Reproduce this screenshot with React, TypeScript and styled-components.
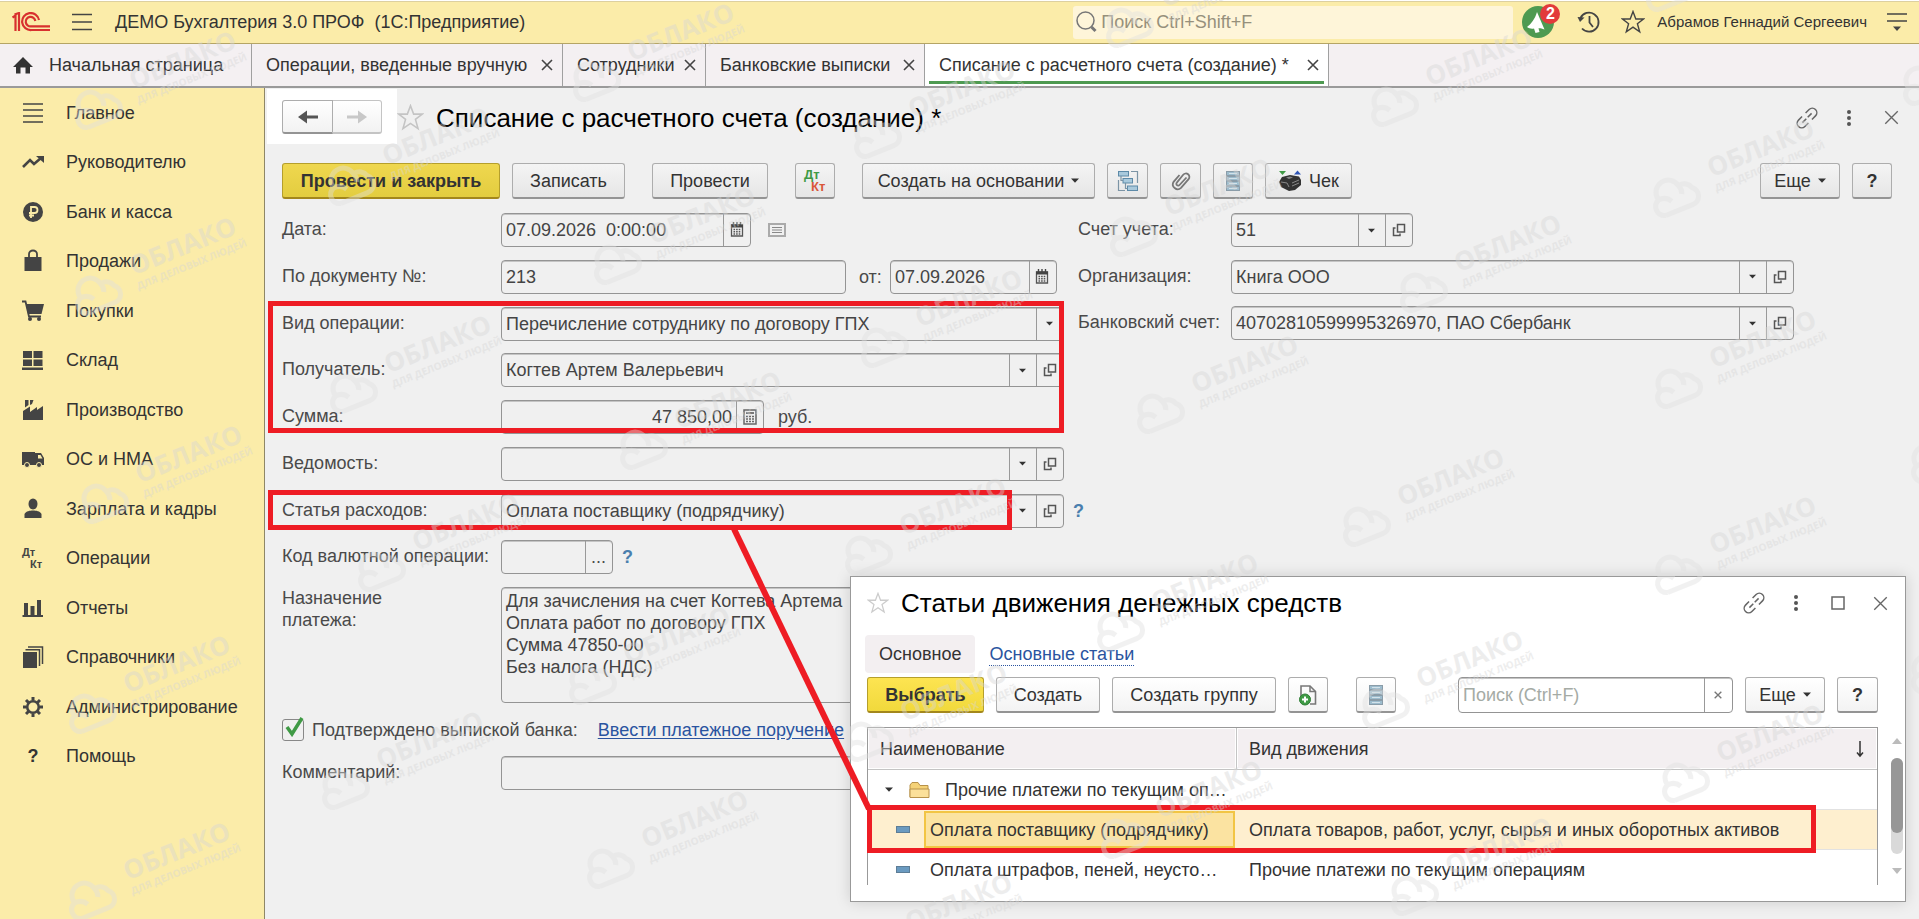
import React from "react";
import styled, { createGlobalStyle } from "styled-components";

const GlobalStyle = createGlobalStyle`
  *, *::before, *::after { box-sizing: border-box; }
  html, body { margin: 0; height: 100%; }
  body { background: #f0f0f0; overflow: hidden; }
  body, button, input, select, textarea {
    font-family: "Liberation Sans", Arial, sans-serif;
    font-size: 18px;
    line-height: 22px;
    color: #444;
  }
  #root { height: 100%; }
`;

const RED = "#ee1c24";

/* ---------- page frame ---------- */

const Page = styled.div`
  position: relative;
  display: flex;
  flex-direction: column;
  min-height: 100vh;
  overflow: hidden;
`;

const TopBar = styled.header`
  display: flex;
  align-items: center;
  gap: 22px;
  height: 44px;
  padding: 0 12px;
  background: #fbeca9;
  border-top: 1px solid #fff;
  border-bottom: 1px solid #b5a565;
  box-shadow: inset 0 1px 0 #ddd0a0;
`;

const PlainButton = styled.button`
  display: flex;
  align-items: center;
  justify-content: center;
  padding: 0;
  border: 0;
  background: none;
  color: #444;
`;

const AppTitle = styled.h1`
  flex: 1;
  margin: 0 0 0 1px;
  font-size: 18px;
  font-weight: 400;
  color: #333;
  white-space: pre;
`;

const TopRight = styled.div`
  display: flex;
  align-items: center;
  gap: 8px;
`;

const GlobalSearch = styled.label`
  display: flex;
  align-items: center;
  gap: 2px;
  width: 440px;
  height: 33px;
  padding-left: 2px;
  border-radius: 3px;
  background: #fef5d9;
`;

const GlobalSearchInput = styled.input`
  flex: 1;
  min-width: 0;
  padding: 0;
  border: 0;
  outline: 0;
  background: none;
  &::placeholder { color: #96907c; opacity: 1; }
`;

const TopActions = styled.div`
  display: flex;
  align-items: center;
  gap: 20px;
`;

const BellButton = styled(PlainButton)`
  position: relative;
  width: 36px;
  height: 36px;
`;

const Badge = styled.span`
  position: absolute;
  top: 0;
  right: -3px;
  width: 20px;
  height: 20px;
  border-radius: 10px;
  background: #e23b3b;
  color: #fff;
  font-size: 16px;
  font-weight: 700;
  line-height: 20px;
  text-align: center;
`;

const UserName = styled.span`
  margin: 0 12px 0 4px;
  font-size: 15px;
  color: #333;
  white-space: nowrap;
`;

const TabBar = styled.nav`
  display: flex;
  height: 44px;
  background: #f4f0f2;
  border-bottom: 2px solid #9a9a9a;
`;

const Tab = styled.div<{ $w: number; $active?: boolean }>`
  position: relative;
  display: flex;
  align-items: center;
  justify-content: space-between;
  width: ${(p) => p.$w}px;
  padding: 0 9px 0 14px;
  border-right: 1px solid #a0a0a0;
  background: ${(p) => (p.$active ? "#fff" : "transparent")};
  white-space: nowrap;
  color: #333;
  ${(p) =>
    p.$active &&
    `&::after {
      content: "";
      position: absolute;
      left: 4px;
      right: 4px;
      bottom: 2px;
      height: 3px;
      background: #4e9a51;
    }`}
`;

const HomeTab = styled(Tab)`
  justify-content: flex-start;
  gap: 16px;
  padding: 0 0 0 13px;
`;

const TabLink = styled.a`
  color: inherit;
  text-decoration: none;
`;

const Body = styled.div`
  display: flex;
  flex: 1;
`;

const Sidebar = styled.nav`
  flex: none;
  width: 265px;
  background: #fbeca9;
  border-right: 1px solid #8f8766;
`;

const MenuList = styled.ul`
  display: grid;
  grid-auto-rows: 1fr;
  height: 693px;
  margin: 0;
  padding: 0;
  list-style: none;
`;

const MenuLink = styled.a`
  display: flex;
  align-items: center;
  gap: 21px;
  height: 100%;
  padding-left: 21px;
  color: #333;
  text-decoration: none;
`;

const Work = styled.main`
  flex: 1;
  min-width: 0;
  padding: 1px 0 0 2px;
`;

/* ---------- document heading and toolbar ---------- */

const Heading = styled.div`
  display: flex;
  align-items: center;
  height: 57px;
  padding-right: 16px;
`;

const NavBlock = styled.div`
  display: flex;
  align-self: flex-start;
  height: 55px;
  padding: 11px 15px;
  background: #fff;
`;

const buttonFace = `
  display: flex;
  align-items: center;
  justify-content: center;
  padding: 0;
  border: 1px solid #adadad;
  border-bottom: 2px solid #949494;
  border-radius: 3px;
  white-space: nowrap;
  color: #333;
`;

const NavButton = styled.button<{ $last?: boolean }>`
  ${buttonFace}
  width: ${(p) => (p.$last ? 49 : 51)}px;
  height: 34px;
  background: linear-gradient(#fff, #f2f2f2);
  border-radius: ${(p) => (p.$last ? "0 3px 3px 0" : "3px 0 0 3px")};
  ${(p) => p.$last && "border-color: #c4c4c4; border-left: 0;"}
`;

const DocTitle = styled.h2`
  margin: 0 auto 0 12px;
  font-size: 26px;
  font-weight: 400;
  line-height: 30px;
  color: #000;
  white-space: nowrap;
`;

const HeadIcons = styled.div`
  display: flex;
  align-items: center;
  gap: 18px;
`;

const HeadButton = styled(PlainButton)`
  width: 24px;
  height: 24px;
`;

const Toolbar = styled.div`
  display: flex;
  gap: 12px;
  padding: 17px 27px 14px 15px;
`;

const Button = styled.button<{ $w: number; $primary?: boolean; $white?: boolean; $before?: number }>`
  ${buttonFace}
  gap: 7px;
  width: ${(p) => p.$w}px;
  height: 36px;
  margin-left: ${(p) => p.$before ?? 0}px;
  background: ${(p) =>
    p.$primary
      ? p.$white
        ? "linear-gradient(#fde451, #f1d93c)"
        : "linear-gradient(#efd74f, #e3cd3f)"
      : p.$white
        ? "linear-gradient(#fff, #f3f3f3)"
        : "linear-gradient(#f4f4f4, #e6e6e6)"};
  ${(p) => p.$primary && "border-color: #b59f2c; border-bottom-color: #a3871c; font-weight: 700;"}
`;

const Spacer = styled.span`
  flex: 1;
`;

const Help = styled.button`
  padding: 0;
  border: 0;
  background: none;
  color: #4a7fae;
  font-weight: 700;
`;

/* ---------- form ---------- */

const Form = styled.form`
  display: grid;
  grid-template-columns: 796px 1fr;
  padding-left: 15px;
`;

const Rows = styled.div<{ $rows: number; $h: number }>`
  display: grid;
  grid-template-rows: repeat(${(p) => p.$rows}, 1fr);
  height: ${(p) => p.$h}px;
`;

const Row = styled.div<{ $label: number }>`
  display: grid;
  grid-template-columns: ${(p) => p.$label}px 1fr;
  align-items: start;
`;

const Label = styled.label`
  padding-top: 5px;
  color: #4a4a4a;
  white-space: nowrap;
`;

const Cells = styled.div`
  display: flex;
  align-items: center;
  height: 34px;
`;

const Field = styled.span<{ $w: number; $h?: number }>`
  display: flex;
  width: ${(p) => p.$w}px;
  height: ${(p) => p.$h ?? 34}px;
  border: 1px solid #949494;
  border-radius: 4px;
  box-shadow: inset 0 1px 0 #c4c4c4;
  overflow: hidden;
`;

const FieldInput = styled.input<{ $right?: boolean }>`
  flex: 1;
  min-width: 0;
  padding: 0 4px;
  border: 0;
  outline: 0;
  background: none;
  text-align: ${(p) => (p.$right ? "right" : "left")};
  &::placeholder { color: #a5aba5; opacity: 1; }
`;

const FieldSelect = styled.select`
  flex: 1;
  min-width: 0;
  padding: 0 4px;
  border: 0;
  outline: 0;
  appearance: none;
  background: none;
`;

const FieldButton = styled.button<{ $w?: number }>`
  display: flex;
  align-items: center;
  justify-content: center;
  flex: none;
  width: ${(p) => p.$w ?? 27}px;
  padding: 0 1px 0 0;
  border: 0;
  border-left: 1px solid #999;
  background: none;
  color: #4d4d4d;
`;

const Inline = styled.label<{ $x: number; $r?: number }>`
  margin: 0 ${(p) => p.$r ?? 0}px 0 ${(p) => p.$x}px;
  color: #4a4a4a;
`;

const Hint = styled.span<{ $x: number }>`
  display: flex;
  margin-left: ${(p) => p.$x}px;
`;

const Purpose = styled.textarea`
  display: block;
  width: 563px;
  height: 116px;
  margin: 0;
  padding: 2px 4px;
  border: 1px solid #949494;
  border-radius: 4px;
  box-shadow: inset 0 1px 0 #c4c4c4;
  background: none;
  outline: 0;
  resize: none;
`;

const PurposeRow = styled(Row)`
  ${Label} { padding-top: 0; }
`;

const ConfirmRow = styled.div`
  display: flex;
  align-items: center;
  gap: 20px;
  margin: 14px 0 13px;
  height: 26px;
`;

const CheckLabel = styled.label`
  display: flex;
  align-items: center;
  gap: 8px;
  color: #4a4a4a;
`;

const CheckBox = styled.span`
  position: relative;
  display: flex;
  width: 22px;
  height: 22px;
  svg { position: absolute; left: 3px; top: -2px; }
`;

const CheckInput = styled.input`
  appearance: none;
  width: 22px;
  height: 22px;
  margin: 0;
  border: 1px solid #888;
  border-radius: 3px;
`;

const TextLink = styled.a<{ $dotted?: boolean }>`
  color: #2a54a0;
  ${(p) =>
    p.$dotted
      ? "text-decoration: none; border-bottom: 1px dotted #2a54a0;"
      : "text-decoration: underline; text-underline-offset: 2px;"}
  white-space: nowrap;
`;

/* ---------- floating window ---------- */

const Window = styled.section`
  position: absolute;
  top: 576px;
  left: 850px;
  right: 13px;
  height: 326px;
  padding: 6px 27px 0 16px;
  background: #fff;
  border: 1px solid #999;
  box-shadow: 0 0 14px rgba(0, 0, 0, 0.15);
`;

const WindowHead = styled.div`
  display: flex;
  align-items: center;
  height: 40px;
  margin-right: -14px;
`;

const WindowTabs = styled.div`
  display: flex;
  align-items: center;
  gap: 14px;
  height: 38px;
  margin: 12px 0 4px -2px;
`;

const CurrentTab = styled.span`
  padding: 8px 14px;
  border-radius: 4px;
  background: #f3eff1;
  color: #333;
`;

const WindowTools = styled.div`
  display: flex;
  gap: 12px;
  margin-bottom: 14px;
`;

const TableWrap = styled.div`
  position: relative;
  height: 158px;
  border: 1px solid #999;
  border-bottom: 0;
  overflow: hidden;
`;

const Table = styled.table`
  width: 100%;
  table-layout: fixed;
  border-collapse: separate;
  border-spacing: 0;
  color: #333;
`;

const Th = styled.th<{ $w?: number }>`
  ${(p) => p.$w && `width: ${p.$w}px;`}
  height: 42px;
  padding: 0 12px;
  border-right: ${(p) => (p.$w ? "1px solid #c4c4c4" : "0")};
  border-bottom: 1px solid #c4c4c4;
  background: #f3eff1;
  box-shadow: inset 0 0 0 1px #fff;
  font-weight: 400;
  text-align: left;
`;

const ThInner = styled.span`
  display: flex;
  align-items: center;
  justify-content: space-between;
`;

const Td = styled.td<{ $picked?: boolean }>`
  height: 40px;
  padding: 0 0 0 12px;
  border-bottom: 1px solid #e2e2e2;
  background: ${(p) => (p.$picked ? "#feefcf" : "#fff")};
  white-space: nowrap;
`;

const NameCell = styled.div<{ $group?: boolean }>`
  display: flex;
  align-items: center;
  gap: ${(p) => (p.$group ? 15 : 14)}px;
  margin-left: ${(p) => (p.$group ? 4 : 16)}px;
`;

const PickedName = styled.span<{ $picked?: boolean }>`
  flex: 1;
  height: 37px;
  margin: 0 2px 0 0;
  padding: 0 4px;
  line-height: 34px;
  border: 2px solid ${(p) => (p.$picked ? "#f2c544" : "transparent")};
  background: ${(p) => (p.$picked ? "#fbe3a1" : "transparent")};
`;

const Scroll = styled.div`
  position: absolute;
  top: 160px;
  right: 2px;
  display: flex;
  flex-direction: column;
  align-items: center;
  gap: 13px;
  width: 12px;
`;

const Track = styled.div`
  width: 12px;
  height: 96px;
  border-radius: 6px;
  background: #d9d9d9;
`;

const Thumb = styled.div`
  height: 75px;
  border-radius: 6px;
  background: #979797;
`;

/* ---------- overlays ---------- */

const Overlay = styled.svg`
  position: absolute;
  top: 0;
  left: 0;
  width: 100%;
  height: 100%;
  pointer-events: none;
`;

/* ---------- icons ---------- */

type IconProps = { w?: number; h?: number; box?: string; children: React.ReactNode };
const Icon = ({ w = 24, h = 24, box, children }: IconProps) => (
  <svg width={w} height={h} viewBox={box ?? `0 0 ${w} ${h}`} fill="none" stroke="#444" strokeWidth="1.5" aria-hidden="true">
    {children}
  </svg>
);

const Logo = () => (
  <Icon w={38} h={20}>
    <g stroke="#d8312f" strokeWidth="2.200">
      <path d="M0.500 5.500 L3.500 3.500 V19" />
      <path d="M2.500 2.500 L7 1 V19" />
      <path d="M27 8 A8.500 8.500 0 1 0 19.500 18 H38" />
      <path d="M23.300 9 A4.800 4.800 0 1 0 19.500 14.300 H38" />
    </g>
  </Icon>
);
const Burger = () => (
  <Icon w={20} h={18}>
    <path d="M0 1.500H20M0 9H20M0 16.500H20" strokeWidth="1.500" />
  </Icon>
);
const SearchIcon = () => (
  <Icon w={24} h={24}>
    <circle cx="10.500" cy="10.500" r="8.500" stroke="#777" />
    <path d="M16.500 17 L20.500 21" stroke="#777" strokeWidth="3" />
  </Icon>
);
const Bell = () => (
  <Icon w={34} h={34}>
    <circle cx="16" cy="17" r="16" fill="#4e9a51" stroke="none" />
    <path d="M5 22 C9 19 13 14 15 7 L22.500 24.500 C20 23.500 18 23 16.500 23.200 L17.500 27 L13.500 28 L12 23.500 C9.500 24 7 23.500 5 22Z" fill="#fff" stroke="none" />
  </Icon>
);
const History = () => (
  <Icon w={24} h={24}>
    <path d="M3.500 8 A9.500 9.500 0 1 1 5 18.500" strokeWidth="1.800" />
    <path d="M0.500 7 L7.500 7.500 L3 12Z" fill="#444" stroke="none" />
    <path d="M12.500 6 V12.500 L16 17" strokeWidth="1.800" />
  </Icon>
);
const Star = ({ size = 24, color = "#444" }: { size?: number; color?: string }) => (
  <Icon w={size} h={size} box="0 0 24 24">
    <path d="M12 1.500 L14.800 9 H22.500 L16.400 13.700 L18.700 21.800 L12 17.200 L5.300 21.800 L7.600 13.700 L1.500 9 H9.200Z" stroke={color} strokeWidth="1.400" />
  </Icon>
);
const MenuDown = () => (
  <Icon w={20} h={20}>
    <path d="M0 2H20M0 9H20" strokeWidth="1.500" />
    <path d="M6 14.500H14L10 19Z" fill="#444" stroke="none" />
  </Icon>
);
const Cross = ({ size = 11, weight = 1.6, color = "#444" }: { size?: number; weight?: number; color?: string }) => (
  <Icon w={size} h={size} box="0 0 12 12">
    <path d="M1 1 L11 11 M11 1 L1 11" strokeWidth={weight} stroke={color} />
  </Icon>
);
const Home = () => (
  <Icon w={20} h={18}>
    <path d="M10 1 L20 11 H17 V17.500 H12.500 V11.500 H7.500 V17.500 H3 V11 H0Z" fill="#333" stroke="none" />
  </Icon>
);
const ArrowIcon = ({ right }: { right?: boolean }) => (
  <Icon w={20} h={16}>
    <path
      d={right ? "M0 6.500H11V1.500L20 8L11 14.500V9.500H0Z" : "M20 6.500H9V1.500L0 8L9 14.500V9.500H20Z"}
      fill={right ? "#c8c8c8" : "#555"}
      stroke="none"
    />
  </Icon>
);
const LinkIcon = () => (
  <Icon w={24} h={24}>
    <g stroke="#666" strokeWidth="1.500" transform="rotate(-45 12 12)">
      <path d="M9.500 7.500 H4.500 A4.500 4.500 0 0 0 4.500 16.500 H9.500" />
      <path d="M14.500 7.500 H19.500 A4.500 4.500 0 0 1 19.500 16.500 H14.500" />
      <path d="M5.500 12H18.500" strokeDasharray="5.500 2" />
    </g>
  </Icon>
);
const Dots = () => (
  <Icon w={6} h={16}>
    <g fill="#555" stroke="none">
      <circle cx="3" cy="2" r="2" />
      <circle cx="3" cy="8" r="2" />
      <circle cx="3" cy="14" r="2" />
    </g>
  </Icon>
);
const Square = () => (
  <Icon w={14} h={14}>
    <rect x="1" y="1" width="12" height="12" stroke="#666" />
  </Icon>
);
const Caret = ({ w = 8 }: { w?: number }) => (
  <Icon w={w} h={5} box="0 0 8 5">
    <path d="M0 0.500H8L4 4.800Z" fill="#333" stroke="none" />
  </Icon>
);
const OpenIcon = () => (
  <Icon w={14} h={14}>
    <path d="M5.500 1.500H12.500V9H5.500ZM3.500 5H1.500V12.500H8V10.500" stroke="#555" />
  </Icon>
);
const Calendar = () => (
  <Icon w={14} h={16}>
    <path d="M1.500 3H12.500V14H1.500Z" stroke="#555" strokeWidth="1.300" />
    <path d="M1 4H13" stroke="#444" strokeWidth="3" />
    <path d="M3.500 0V3M7 0V3M10.500 0V3" stroke="#444" strokeWidth="1.400" />
    <path d="M3.500 7.500H11M3.500 9.800H11M3.500 12H11" strokeWidth="1.400" strokeDasharray="1.600 1" stroke="#555" />
  </Icon>
);
const Calculator = () => (
  <Icon w={14} h={16}>
    <rect x="1" y="1" width="12" height="14" stroke="#666" />
    <path d="M3 4H11" strokeWidth="2" stroke="#777" />
    <path d="M3 7.500H11M3 10H11M3 12.500H11" strokeDasharray="2 1" stroke="#666" />
  </Icon>
);
const Register = () => (
  <Icon w={18} h={14}>
    <rect x="1" y="1" width="16" height="12" stroke="#aaa" strokeWidth="2" />
    <path d="M4 4.500H14M4 7H14M4 9.500H14" stroke="#888" strokeWidth="1.200" />
  </Icon>
);
const DtKt = ({ color }: { color?: boolean }) => (
  <svg width="24" height="24" viewBox="0 0 24 24" fontFamily="Liberation Sans, sans-serif" fontWeight="700" fontSize={color ? 13 : 11} aria-hidden="true">
    <text x="1" y="10" fill={color ? "#3f9a45" : "#444"}>Дт</text>
    <text x={color ? 8 : 9} y="22" fill={color ? "#d9573a" : "#444"}>Кт</text>
  </svg>
);
const Structure = () => (
  <Icon w={22} h={22}>
    <g fill="#a9c9dc" stroke="#5d8aa8" strokeWidth="1">
      <rect x="1.500" y="1.500" width="10" height="4.500" />
      <rect x="6" y="8.500" width="9.500" height="4.500" />
      <rect x="10.500" y="16" width="10" height="4.500" />
    </g>
    <path d="M14 1.500H20.500V13M1.500 10V20.500H8M4 6V10.500H6M8.500 13V18.500H10.500" stroke="#7c94a5" strokeWidth="1.200" />
  </Icon>
);
const Clip = () => (
  <Icon w={22} h={22}>
    <path
      d="M16.500 7.500 L9.500 15 A1.800 1.800 0 0 1 6.800 12.600 L13.200 4.800 A3.400 3.400 0 0 1 18.600 9.200 L11 17.800 A4.800 4.800 0 0 1 3.600 11.800 L9.500 5"
      stroke="#777"
      strokeWidth="1.800"
    />
  </Icon>
);
const ListIcon = () => (
  <Icon w={16} h={22}>
    <g fill="#9dbccd" stroke="#8a9ca8" strokeWidth="1">
      <rect x="1.500" y="1.500" width="13" height="4" />
      <rect x="1.500" y="6.500" width="13" height="4" />
      <rect x="1.500" y="11.500" width="13" height="4" />
      <rect x="1.500" y="16.500" width="13" height="4" />
    </g>
    <path d="M4 3.500H12M4 8.500H12M4 13.500H12M4 18.500H12" stroke="#d3e2ea" strokeWidth="1" />
  </Icon>
);
const CheckPrinter = () => (
  <Icon w={24} h={24}>
    <path d="M1 2H8L4.500 6Z" fill="#3f9a45" stroke="none" />
    <path d="M16 5.500L19.500 1.500L23 5.500Z" fill="#2f55b5" stroke="none" />
    <path d="M4 8L12 6L21 7.500L23 11V16L17 21L11 22L3 18L1 13Z" fill="#333" stroke="none" />
    <path d="M8 8.500L12 7.500L15 8.500L11 10Z" fill="#888" stroke="none" />
    <path d="M3 13L9 14L11 18M14 14L21 11M14 17L21 14" stroke="#888" strokeWidth="1" />
  </Icon>
);
const AddDoc = () => (
  <Icon w={20} h={22}>
    <path d="M3 12V2H12L17.500 7.500V20H12" stroke="#777" strokeWidth="1.600" />
    <path d="M12 2V7.500H17.500" stroke="#777" />
    <circle cx="7" cy="15.500" r="5.500" fill="#3f9a45" stroke="#2f7f36" strokeWidth="1" />
    <path d="M7 12.500V18.500M4 15.500H10" stroke="#fff" strokeWidth="2" />
  </Icon>
);
const Folder = () => (
  <Icon w={21} h={18}>
    <path d="M1 16V4L3 1.500H9L11 4.500H19V16Z" fill="#f5d277" stroke="#b8924a" strokeWidth="1" />
    <path d="M1 16.500V8H20V16.500Z" fill="#fbe09a" stroke="#b8924a" strokeWidth="1" />
  </Icon>
);
const Dash = () => (
  <Icon w={14} h={7}>
    <rect x="0.500" y="0.500" width="13" height="6" fill="#6a9ac0" stroke="#5d7d96" strokeWidth="1" />
  </Icon>
);
const SortDown = () => (
  <Icon w={10} h={18}>
    <path d="M5 1V16M2 12.500L5 16L8 12.500" stroke="#333" />
  </Icon>
);

/* Section icons share a 24px box and one dark fill. */
const sectionIcons: Record<string, React.ReactNode> = {
  main: <path d="M2 3H22M2 9H22M2 15H22M2 21H22" strokeWidth="1.600" />,
  chief: (
    <>
      <path d="M2 17L9 10L13 14L20 8" strokeWidth="2.600" />
      <path d="M15 6H23V13Z" fill="#444" stroke="none" />
    </>
  ),
  bank: (
    <>
      <circle cx="12" cy="12" r="10" fill="#444" stroke="none" />
      <path d="M10 18V7H13.500A3 3 0 0 1 13.500 13H8M8 15.500H13" stroke="#fbeca9" strokeWidth="1.800" />
    </>
  ),
  sales: (
    <>
      <path d="M3.500 8H20.500V22H3.500Z" fill="#444" stroke="none" />
      <path d="M8 11V5A4 3.500 0 0 1 16 5V11" strokeWidth="1.800" />
    </>
  ),
  buy: (
    <>
      <path d="M5 5H23L20.500 15H7Z" fill="#444" stroke="none" />
      <path d="M1 2.500H4.500L8 17.500H20" strokeWidth="1.800" />
      <circle cx="9" cy="20" r="2" fill="#444" stroke="none" />
      <circle cx="18" cy="20" r="2" fill="#444" stroke="none" />
    </>
  ),
  store: <path d="M2 3H11V10H2ZM12.500 3H21.500V10H12.500ZM2 11.500H11V18H2ZM12.500 11.500H21.500V18H12.500ZM1 19.500H22V22H1Z" fill="#444" stroke="none" />,
  plant: <path d="M2 22V13L9 8.500V14L16 9V12L22 8V22ZM4 2H7.500V7L4 9.500ZM9 2H12.500L11 6L9 7Z" fill="#444" stroke="none" />,
  assets: (
    <>
      <path d="M1 5H14V18H1ZM15 6H20L23 11V18H13V6Z" fill="#444" stroke="none" />
      <path d="M17 8H19.500L21.500 11.500H17Z" fill="#fbeca9" stroke="none" />
      <circle cx="6" cy="18" r="2.500" fill="#444" stroke="#fbeca9" strokeWidth="1" />
      <circle cx="18" cy="18" r="2.500" fill="#444" stroke="#fbeca9" strokeWidth="1" />
    </>
  ),
  staff: (
    <>
      <ellipse cx="12" cy="7" rx="4.500" ry="5.500" fill="#444" stroke="none" />
      <path d="M3.500 21V17C5 14 9 13.500 12 13.500S19 14 20.500 17V21Z" fill="#444" stroke="none" />
    </>
  ),
  reports: <path d="M3 7H7V19H3ZM9.500 10H13.500V19H9.500ZM16 4H20V19H16ZM1.500 19H22V21H1.500Z" fill="#444" stroke="none" />,
  books: (
    <>
      <path d="M2 7H16V23H2Z" fill="#444" stroke="none" />
      <path d="M4.500 4.800H18.500V21M7 2H21.500V19" strokeWidth="1.500" />
    </>
  ),
  admin: (
    <>
      <circle cx="12" cy="12" r="5.800" strokeWidth="2.600" />
      <path d="M12 2V5.500M12 18.500V22M2 12H5.500M18.500 12H22M5 5L7.500 7.500M16.500 16.500L19 19M19 5L16.500 7.500M7.500 16.500L5 19" strokeWidth="3" />
    </>
  ),
};

const QuestionBox = styled.span`
  width: 24px;
  font-weight: 700;
  text-align: center;
`;

const sections: [string, string][] = [
  ["main", "Главное"],
  ["chief", "Руководителю"],
  ["bank", "Банк и касса"],
  ["sales", "Продажи"],
  ["buy", "Покупки"],
  ["store", "Склад"],
  ["plant", "Производство"],
  ["assets", "ОС и НМА"],
  ["staff", "Зарплата и кадры"],
  ["ops", "Операции"],
  ["reports", "Отчеты"],
  ["books", "Справочники"],
  ["admin", "Администрирование"],
  ["help", "Помощь"],
];

const SectionIcon = ({ id }: { id: string }) => {
  if (id === "ops") return <DtKt />;
  if (id === "help") return <QuestionBox aria-hidden="true">?</QuestionBox>;
  return <Icon>{sectionIcons[id]}</Icon>;
};

/* ---------- watermark and callouts ---------- */

const marks: [number, number][] = [
  [96, 108], [594, 80], [1127, 26], [1667, -10], [1392, 105], [1924, 84], [1674, 196], [1421, 291],
  [1676, 387], [349, 184], [96, 294], [615, 263], [875, 137], [1131, 235], [882, 346], [351, 392],
  [102, 502], [641, 448], [379, 570], [866, 554], [1158, 412], [1118, 630], [90, 712], [90, 899],
  [343, 788], [590, 683], [608, 867], [867, 740], [1122, 837], [872, 950], [1383, 707], [1683, 781],
  [1412, 894], [1932, 672], [1364, 525], [1676, 573], [1932, 462],
];

const Watermarks = () => (
  <Overlay aria-hidden="true" fontFamily="Open Sans, sans-serif">
    {marks.map(([x, y]) => (
      <g key={`${x}-${y}`} transform={`translate(${x} ${y}) rotate(-22)`} opacity="0.42">
        <path
          d="M-15 15 H14 A9 9 0 0 0 20 -1 A10 10 0 0 0 9 -8 M-15 15 A9 9 0 0 1 -16 -2 Q-8 -3 -4 4 M-16 -3 A12 12 0 0 1 8 -8 Q10 -3 8 1"
          fill="none"
          stroke="#e0e0e0"
          strokeWidth="5"
        />
        <text x="42" y="-3" fontSize="26" fontWeight="700" fill="#d6d6d6">ОБЛАКО</text>
        <text x="41" y="12" fontSize="10" fontWeight="700" fill="#d6d6d6">ДЛЯ ДЕЛОВЫХ ЛЮДЕЙ</text>
      </g>
    ))}
  </Overlay>
);

const Callouts = () => (
  <Overlay fill="none" stroke={RED} strokeWidth="5" aria-hidden="true">
    <rect x="270.500" y="303.500" width="791" height="127" />
    <rect x="270.500" y="492.500" width="739" height="35" />
    <rect x="869.500" y="807.500" width="944" height="43" />
    <path d="M734 529 L869 809" strokeWidth="6" />
  </Overlay>
);

/* ---------- form pieces ---------- */

type Action = "list" | "open" | "date" | "calc" | "more";
const actionFace: Record<Action, [string, React.ReactNode]> = {
  list: ["Выбрать из списка", <Caret key="l" w={7} />],
  open: ["Открыть", <OpenIcon key="o" />],
  date: ["Календарь", <Calendar key="d" />],
  calc: ["Калькулятор", <Calculator key="c" />],
  more: ["Выбрать", "..."],
};

type EntryProps = { id: string; w: number; value?: string; right?: boolean; actions?: Action[] };
const Entry = ({ id, w, value = "", right, actions = [] }: EntryProps) => (
  <Field $w={w}>
    <FieldInput id={id} defaultValue={value} $right={right} />
    {actions.map((a) => (
      <FieldButton key={a} type="button" aria-label={actionFace[a][0]}>{actionFace[a][1]}</FieldButton>
    ))}
  </Field>
);

const FormRow = ({ id, label, wide = 219, children }: {
  id: string; label: string; wide?: number; children: React.ReactNode;
}) => (
  <Row $label={wide}>
    <Label htmlFor={id}>{label}</Label>
    <Cells>{children}</Cells>
  </Row>
);

const tabs: [string, number][] = [
  ["Операции, введенные вручную", 311],
  ["Сотрудники", 143],
  ["Банковские выписки", 219],
  ["Списание с расчетного счета (создание) *", 404],
];

const articles = [
  { name: "Оплата поставщику (подрядчику)", kind: "Оплата товаров, работ, услуг, сырья и иных оборотных активов", picked: true },
  { name: "Оплата штрафов, пеней, неусто…", kind: "Прочие платежи по текущим операциям", picked: false },
];

const ArticlesWindow = () => (
  <Window aria-label="Статьи движения денежных средств">
    <WindowHead>
      <PlainButton aria-label="В избранное"><Star size={22} color="#ccc" /></PlainButton>
      <DocTitle>Статьи движения денежных средств</DocTitle>
      <HeadIcons>
        <HeadButton aria-label="Ссылка"><LinkIcon /></HeadButton>
        <HeadButton aria-label="Меню"><Dots /></HeadButton>
        <HeadButton aria-label="Развернуть"><Square /></HeadButton>
        <HeadButton aria-label="Закрыть"><Cross size={15} weight={1.1} color="#666" /></HeadButton>
      </HeadIcons>
    </WindowHead>
    <WindowTabs>
      <CurrentTab>Основное</CurrentTab>
      <TextLink $dotted href="#articles">Основные статьи</TextLink>
    </WindowTabs>
    <WindowTools>
      <Button $w={117} $primary $white>Выбрать</Button>
      <Button $w={104} $white>Создать</Button>
      <Button $w={164} $white>Создать группу</Button>
      <Button $w={40} $white aria-label="Создать копированием"><AddDoc /></Button>
      <Button $w={40} $white $before={16} aria-label="Список"><ListIcon /></Button>
      <Spacer />
      <Field $w={275} $h={36}>
        <FieldInput placeholder="Поиск (Ctrl+F)" aria-label="Поиск" />
        <FieldButton $w={28} aria-label="Очистить"><Cross size={8} weight={2} color="#777" /></FieldButton>
      </Field>
      <Button $w={80} $white>Еще <Caret /></Button>
      <Button $w={41} $white aria-label="Справка"><b>?</b></Button>
    </WindowTools>
    <TableWrap>
      <Table>
        <thead>
          <tr>
            <Th $w={369}>Наименование</Th>
            <Th><ThInner>Вид движения <SortDown /></ThInner></Th>
          </tr>
        </thead>
        <tbody>
          <tr>
            <Td><NameCell $group><Caret w={10} /><Folder />Прочие платежи по текущим оп…</NameCell></Td>
            <Td />
          </tr>
          {articles.map((a) => (
            <tr key={a.name}>
              <Td $picked={a.picked}>
                <NameCell><Dash /><PickedName $picked={a.picked}>{a.name}</PickedName></NameCell>
              </Td>
              <Td $picked={a.picked}>{a.kind}</Td>
            </tr>
          ))}
        </tbody>
      </Table>
    </TableWrap>
    <Scroll>
      <Icon w={10} h={8}><path d="M0 7H10L5 1Z" fill="#bbb" stroke="none" /></Icon>
      <Track><Thumb /></Track>
      <Icon w={10} h={8}><path d="M0 1H10L5 7Z" fill="#bbb" stroke="none" /></Icon>
    </Scroll>
  </Window>
);

export default function App() {
  return (
    <Page>
      <GlobalStyle />
      <TopBar>
        <Logo />
        <PlainButton aria-label="Главное меню"><Burger /></PlainButton>
        <AppTitle>{"ДЕМО Бухгалтерия 3.0 ПРОФ  (1С:Предприятие)"}</AppTitle>
        <TopRight>
          <GlobalSearch>
            <SearchIcon />
            <GlobalSearchInput placeholder="Поиск Ctrl+Shift+F" aria-label="Поиск" />
          </GlobalSearch>
          <TopActions>
            <BellButton aria-label="Уведомления"><Bell /><Badge>2</Badge></BellButton>
            <PlainButton aria-label="История"><History /></PlainButton>
            <PlainButton aria-label="Избранное"><Star /></PlainButton>
          </TopActions>
          <UserName>Абрамов Геннадий Сергеевич</UserName>
          <PlainButton aria-label="Настройки"><MenuDown /></PlainButton>
        </TopRight>
      </TopBar>

      <TabBar>
        <HomeTab $w={252}><Home /><TabLink href="#home">Начальная страница</TabLink></HomeTab>
        {tabs.map(([name, w], i) => (
          <Tab key={name} $w={w} $active={i === tabs.length - 1}>
            <TabLink href={`#tab${i}`}>{name}</TabLink>
            <PlainButton aria-label="Закрыть вкладку"><Cross size={12} /></PlainButton>
          </Tab>
        ))}
      </TabBar>

      <Body>
        <Sidebar>
          <MenuList>
            {sections.map(([id, name]) => (
              <li key={id}><MenuLink href={`#${id}`}><SectionIcon id={id} />{name}</MenuLink></li>
            ))}
          </MenuList>
        </Sidebar>

        <Work>
          <Heading>
            <NavBlock>
              <NavButton aria-label="Назад"><ArrowIcon /></NavButton>
              <NavButton $last aria-label="Вперед"><ArrowIcon right /></NavButton>
            </NavBlock>
            <PlainButton aria-label="В избранное"><Star size={27} color="#c4c4c4" /></PlainButton>
            <DocTitle>Списание с расчетного счета (создание) *</DocTitle>
            <HeadIcons>
              <HeadButton aria-label="Ссылка"><LinkIcon /></HeadButton>
              <HeadButton aria-label="Меню"><Dots /></HeadButton>
              <HeadButton aria-label="Закрыть"><Cross size={15} weight={1.1} color="#666" /></HeadButton>
            </HeadIcons>
          </Heading>

          <Toolbar>
            <Button $w={218} $primary>Провести и закрыть</Button>
            <Button $w={113}>Записать</Button>
            <Button $w={116} $before={15}>Провести</Button>
            <Button $w={40} $before={15} aria-label="Проводки"><DtKt color /></Button>
            <Button $w={233} $before={15}>Создать на основании <Caret /></Button>
            <Button $w={41} aria-label="Структура"><Structure /></Button>
            <Button $w={41} aria-label="Файлы"><Clip /></Button>
            <Button $w={40} aria-label="Список"><ListIcon /></Button>
            <Button $w={87}><CheckPrinter />Чек</Button>
            <Spacer />
            <Button $w={80}>Еще <Caret /></Button>
            <Button $w={40} aria-label="Справка"><b>?</b></Button>
          </Toolbar>

          <Form>
            <div>
              <Rows $rows={8} $h={374}>
                <FormRow id="date" label="Дата:">
                  <Entry id="date" w={250} value="07.09.2026  0:00:00" actions={["date"]} />
                  <Hint $x={17}><Register /></Hint>
                </FormRow>
                <FormRow id="num" label="По документу №:">
                  <Entry id="num" w={345} value="213" />
                  <Inline htmlFor="from" $x={13} $r={8}>от:</Inline>
                  <Entry id="from" w={167} value="07.09.2026" actions={["date"]} />
                </FormRow>
                <FormRow id="kind" label="Вид операции:">
                  <Field $w={563}>
                    <FieldSelect id="kind"><option>Перечисление сотруднику по договору ГПХ</option></FieldSelect>
                    <FieldButton type="button" aria-label="Выбрать из списка"><Caret w={7} /></FieldButton>
                  </Field>
                </FormRow>
                <FormRow id="to" label="Получатель:">
                  <Entry id="to" w={563} value="Когтев Артем Валерьевич" actions={["list", "open"]} />
                </FormRow>
                <FormRow id="sum" label="Сумма:">
                  <Entry id="sum" w={263} value="47 850,00" right actions={["calc"]} />
                  <Inline as="span" $x={14}>руб.</Inline>
                </FormRow>
                <FormRow id="sheet" label="Ведомость:">
                  <Entry id="sheet" w={563} actions={["list", "open"]} />
                </FormRow>
                <FormRow id="article" label="Статья расходов:">
                  <Entry id="article" w={563} value="Оплата поставщику (подрядчику)" actions={["list", "open"]} />
                  <Hint $x={9}><Help type="button">?</Help></Hint>
                </FormRow>
                <FormRow id="code" label="Код валютной операции:">
                  <Entry id="code" w={112} actions={["more"]} />
                  <Hint $x={9}><Help type="button">?</Help></Hint>
                </FormRow>
              </Rows>
              <PurposeRow $label={219}>
                <Label htmlFor="purpose">Назначение<br />платежа:</Label>
                <Purpose
                  id="purpose"
                  defaultValue={"Для зачисления на счет Когтева Артема\nОплата работ по договору ГПХ\nСумма 47850-00\nБез налога (НДС)"}
                />
              </PurposeRow>
              <ConfirmRow>
                <CheckLabel>
                  <CheckBox>
                    <CheckInput type="checkbox" defaultChecked />
                    <Icon w={20} h={20}><path d="M2 10L7 17L17 1" stroke="#3f9a45" strokeWidth="3.500" /></Icon>
                  </CheckBox>
                  Подтверждено выпиской банка:
                </CheckLabel>
                <TextLink href="#order">Ввести платежное поручение</TextLink>
              </ConfirmRow>
              <FormRow id="comment" label="Комментарий:">
                <Entry id="comment" w={563} />
              </FormRow>
            </div>
            <Rows $rows={3} $h={140}>
              <FormRow id="acc" label="Счет учета:" wide={153}>
                <Entry id="acc" w={182} value="51" actions={["list", "open"]} />
              </FormRow>
              <FormRow id="org" label="Организация:" wide={153}>
                <Entry id="org" w={563} value="Книга ООО" actions={["list", "open"]} />
              </FormRow>
              <FormRow id="bankacc" label="Банковский счет:" wide={153}>
                <Entry id="bankacc" w={563} value="40702810599995326970, ПАО Сбербанк" actions={["list", "open"]} />
              </FormRow>
            </Rows>
          </Form>
        </Work>
      </Body>

      <ArticlesWindow />
      <Callouts />
      <Watermarks />
    </Page>
  );
}
